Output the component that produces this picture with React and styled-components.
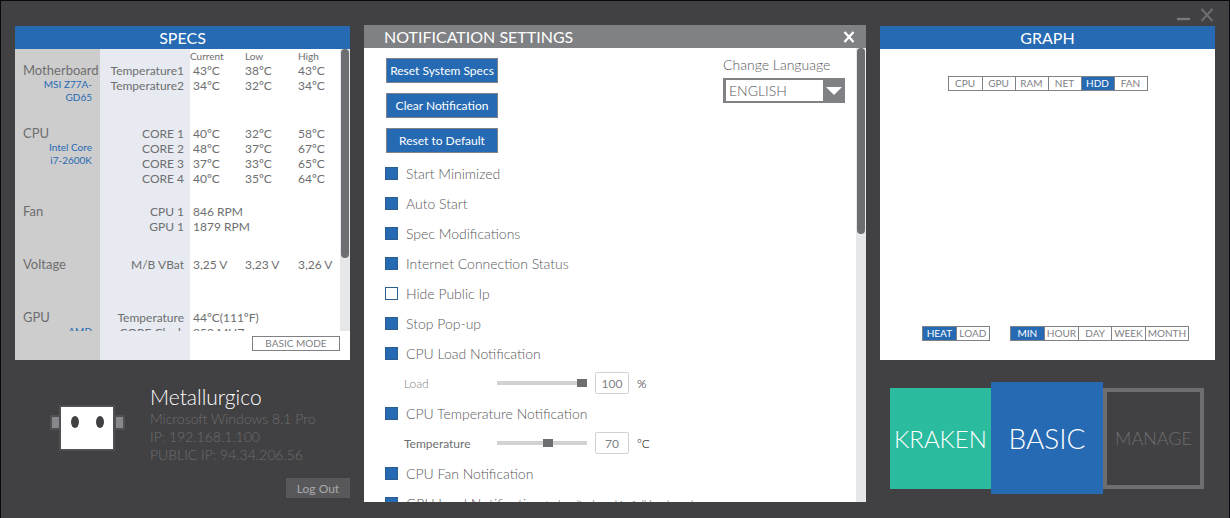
import { useState } from "react";
import styled, { createGlobalStyle } from "styled-components";

const specGroups = [
  {
    name: "Motherboard",
    model: "MSI Z77A-GD65",
    space: 33,
    rows: [
      ["Temperature1", "43ºC", "38ºC", "43ºC"],
      ["Temperature2", "34ºC", "32ºC", "34ºC"],
    ],
  },
  {
    name: "CPU",
    model: "Intel Core i7-2600K",
    space: 18,
    rows: [
      ["CORE 1", "40ºC", "32ºC", "58ºC"],
      ["CORE 2", "48ºC", "37ºC", "67ºC"],
      ["CORE 3", "37ºC", "33ºC", "65ºC"],
      ["CORE 4", "40ºC", "35ºC", "64ºC"],
    ],
  },
  {
    name: "Fan",
    space: 23,
    rows: [
      ["CPU 1", "846 RPM"],
      ["GPU 1", "1879 RPM"],
    ],
  },
  {
    name: "Voltage",
    space: 38,
    rows: [["M/B VBat", "3,25 V", "3,23 V", "3,26 V"]],
  },
  {
    name: "GPU",
    model: "AMD",
    space: 18,
    rows: [
      ["Temperature", "44ºC(111ºF)"],
      ["CORE Clock", "850 MHZ"],
    ],
  },
];

const options = [
  { id: "minimized", label: "Start Minimized", on: true },
  { id: "autostart", label: "Auto Start", on: true },
  { id: "specs", label: "Spec Modifications", on: true },
  { id: "internet", label: "Internet Connection Status", on: true },
  { id: "hideip", label: "Hide Public Ip", on: false },
  { id: "popup", label: "Stop Pop-up", on: true },
  {
    id: "cpuload",
    label: "CPU Load Notification",
    on: true,
    limit: { label: "Load", min: 0, value: 100, unit: "%", light: true },
  },
  {
    id: "cputemp",
    label: "CPU Temperature Notification",
    on: true,
    limit: { label: "Temperature", min: 30, value: 70, unit: "ºC" },
  },
  { id: "cpufan", label: "CPU Fan Notification", on: true },
  {
    id: "gpuload",
    label: "GPU Load Notification",
    note: "to be displayed in full load mode",
    on: true,
  },
];

const Specs = () => {
  return (
    <Panel>
      <PanelTitle>SPECS</PanelTitle>
      <SpecsBody>
        <ScrollArea>
          <SpecsTable>
            <colgroup>
              <col width='85' />
              <col width='90' />
              <col width='55' />
              <col width='53' />
              <col />
            </colgroup>
            <thead>
              <tr>
                <td colSpan={2}></td>
                <SpecsHead>Current</SpecsHead>
                <SpecsHead>Low</SpecsHead>
                <SpecsHead>High</SpecsHead>
              </tr>
            </thead>
            {specGroups.map((group) => (
              <tbody key={group.name}>
                {group.rows.map(([label, ...values], index) => (
                  <tr key={label}>
                    {index === 0 && (
                      <GroupCell rowSpan={group.rows.length + 1}>
                        {group.name}
                        {group.model && <Model>{group.model}</Model>}
                      </GroupCell>
                    )}
                    <LabelCell>{label}</LabelCell>
                    {values.map((value, i) => (
                      <ValueCell
                        key={i}
                        $first={i === 0}
                        colSpan={values.length === 1 ? 3 : 1}
                      >
                        {value}
                      </ValueCell>
                    ))}
                  </tr>
                ))}
                <SpaceRow $height={group.space}>
                  <td colSpan={4}></td>
                </SpaceRow>
              </tbody>
            ))}
          </SpecsTable>
        </ScrollArea>
        <ScrollTrack>
          <ScrollThumb $size={74} />
        </ScrollTrack>
      </SpecsBody>
      <SpecsFooter>
        <ModeButton type='button'>BASIC MODE</ModeButton>
      </SpecsFooter>
    </Panel>
  );
};

const Profile = () => {
  return (
    <StyledProfile>
      <Avatar viewBox='0 0 75 46' aria-hidden='true'>
        <rect x='0' y='10' width='75' height='15' fill='#505052' />
        <rect x='2' y='12' width='7' height='11' fill='#87888c' />
        <rect x='66' y='12' width='7' height='11' fill='#87888c' />
        <rect x='9' y='0' width='56' height='46' fill='#505052' />
        <rect x='11' y='2' width='52' height='42' fill='#ffffff' />
        <ellipse cx='25' cy='17' rx='4' ry='6' fill='#414042' />
        <ellipse cx='50' cy='17' rx='4' ry='6' fill='#414042' />
      </Avatar>
      <ProfileInfo>
        <UserName>Metallurgico</UserName>
        <InfoLine>Microsoft Windows 8.1 Pro</InfoLine>
        <InfoLine>IP: 192.168.1.100</InfoLine>
        <InfoLine>PUBLIC IP: 94.34.206.56</InfoLine>
      </ProfileInfo>
      <LogOutButton type='button'>Log Out</LogOutButton>
    </StyledProfile>
  );
};

const Limit = ({ id, limit }) => {
  const [value, setValue] = useState(limit.value);
  const changeHandler = (event) => setValue(event.target.value);

  return (
    <LimitRow>
      <LimitLabel htmlFor={`${id}-range`} $light={limit.light}>
        {limit.label}
      </LimitLabel>
      <Slider
        type='range'
        id={`${id}-range`}
        min={limit.min}
        max={100}
        value={value}
        onChange={changeHandler}
      />
      <LimitInput
        type='text'
        aria-label={limit.label}
        value={value}
        onChange={changeHandler}
      />
      <Unit>{limit.unit}</Unit>
    </LimitRow>
  );
};

const Option = ({ option }) => {
  const [checked, setChecked] = useState(option.on);

  return (
    <>
      <OptionRow>
        <CheckBox
          type='checkbox'
          id={option.id}
          checked={checked}
          onChange={() => setChecked(!checked)}
        />
        <label htmlFor={option.id}>
          {option.label} {option.note && <Note>{option.note}</Note>}
        </label>
      </OptionRow>
      {option.limit && <Limit id={option.id} limit={option.limit} />}
    </>
  );
};

const Settings = () => {
  return (
    <Panel>
      <SettingsTitle>
        NOTIFICATION SETTINGS
        <CloseButton type='button' aria-label='Close settings'>
          <svg width='12' height='12' viewBox='0 0 12 12'>
            <path d='M1.5 1L10.5 11M10.5 1L1.5 11' stroke='#fff' strokeWidth='2.4' />
          </svg>
        </CloseButton>
      </SettingsTitle>
      <SettingsBody>
        <SettingsContent>
          <SettingsTop>
            <ActionList>
              <ActionButton type='button'>Reset System Specs</ActionButton>
              <ActionButton type='button'>Clear Notification</ActionButton>
              <ActionButton type='button'>Reset to Default</ActionButton>
            </ActionList>
            <Language>
              <label htmlFor='language'>Change Language</label>
              <SelectBox>
                <Select id='language' defaultValue='ENGLISH'>
                  <option>ENGLISH</option>
                </Select>
                <SelectArrow viewBox='0 0 16 8' aria-hidden='true'>
                  <path d='M0 0H16L8 8Z' fill='#fff' />
                </SelectArrow>
              </SelectBox>
            </Language>
          </SettingsTop>
          {options.map((option) => (
            <Option key={option.id} option={option} />
          ))}
        </SettingsContent>
        <ScrollTrack>
          <ScrollThumb $size={41} />
        </ScrollTrack>
      </SettingsBody>
    </Panel>
  );
};

const Tabs = ({ items, initial }) => {
  const [active, setActive] = useState(initial);

  return (
    <TabList>
      {items.map((item) => (
        <Tab
          type='button'
          key={item}
          $active={item === active}
          onClick={() => setActive(item)}
        >
          {item}
        </Tab>
      ))}
    </TabList>
  );
};

const Graph = () => {
  return (
    <Panel>
      <PanelTitle>GRAPH</PanelTitle>
      <GraphBody>
        <Tabs items={["CPU", "GPU", "RAM", "NET", "HDD", "FAN"]} initial='HDD' />
        <GraphFooter>
          <Tabs items={["HEAT", "LOAD"]} initial='HEAT' />
          <Tabs items={["MIN", "HOUR", "DAY", "WEEK", "MONTH"]} initial='MIN' />
        </GraphFooter>
      </GraphBody>
    </Panel>
  );
};

const App = () => {
  return (
    <>
      <GlobalStyle />
      <Window>
        <TitleBar>
          <WindowButton type='button' aria-label='Minimize'>
            <svg width='14' height='14' viewBox='0 0 14 14'>
              <path d='M0 11H13' stroke='#77787a' strokeWidth='2.4' />
            </svg>
          </WindowButton>
          <WindowButton type='button' aria-label='Close'>
            <svg width='14' height='14' viewBox='0 0 14 14'>
              <path d='M1.5 1L12.5 13M12.5 1L1.5 13' stroke='#6d6e70' strokeWidth='2' />
            </svg>
          </WindowButton>
        </TitleBar>
        <Columns>
          <SideColumn>
            <Specs />
            <Profile />
          </SideColumn>
          <MainColumn>
            <Settings />
          </MainColumn>
          <SideColumn>
            <Graph />
            <TileRow>
              <Tile type='button' $color='#2bbb9e'>
                KRAKEN
              </Tile>
              <BigTile type='button' $color='#256ab3'>
                BASIC
              </BigTile>
              <OutlineTile type='button'>MANAGE</OutlineTile>
            </TileRow>
          </SideColumn>
        </Columns>
      </Window>
    </>
  );
};

export default App;

const GlobalStyle = createGlobalStyle`
  * {
    box-sizing: border-box;
  }
  body {
    margin: 0;
    background-color: #414042;
    font-family: Lato, "Liberation Sans", sans-serif;
    font-size: 12px;
    color: #6d6e70;
  }
  button, input, select {
    margin: 0;
    padding: 0;
    border: none;
    border-radius: 0;
    background: none;
    font-family: inherit;
    color: inherit;
  }
  button {
    cursor: pointer;
  }
`;

const Window = styled.div`
  display: flex;
  flex-direction: column;
  height: 100vh;
  border: 1px solid #08080f;
  border-bottom: none;
  background-color: #414042;
`;

const TitleBar = styled.div`
  display: flex;
  justify-content: flex-end;
  align-items: center;
  gap: 9px;
  height: 24px;
  padding: 4px 15px 0 0;
`;

const WindowButton = styled.button`
  display: flex;
`;

const Columns = styled.div`
  flex: 1;
  min-height: 0;
  display: grid;
  grid-template-columns: 335fr 502fr 335fr;
  gap: 14px;
  padding: 0 14px;
`;

const SideColumn = styled.div`
  display: flex;
  flex-direction: column;
  min-width: 0;
  min-height: 0;
  padding-top: 1px;
`;

const MainColumn = styled(SideColumn)`
  padding: 0 0 16px;
`;

const Panel = styled.section`
  flex: 1;
  min-height: 0;
  display: flex;
  flex-direction: column;
  background-color: white;
`;

const PanelTitle = styled.h2`
  flex: none;
  margin: 0;
  height: 23px;
  line-height: 24px;
  background-color: #256ab3;
  color: white;
  font-size: 16px;
  font-weight: 400;
  text-align: center;
`;

const SettingsTitle = styled(PanelTitle)`
  display: flex;
  justify-content: space-between;
  align-items: center;
  padding: 0 11px 0 20px;
  background-color: #808184;
`;

const CloseButton = styled.button`
  display: flex;
`;

const ScrollArea = styled.div`
  flex: 1;
  min-width: 0;
  overflow-y: auto;
  scrollbar-width: none;
`;

const ScrollTrack = styled.div`
  flex: none;
  width: 10px;
  padding: 0 1px;
  background-color: #e6e7e9;
`;

const ScrollThumb = styled.div`
  height: ${(props) => props.$size}%;
  border-radius: 4px;
  background-color: #6d6e71;
`;

const SpecsBody = styled.div`
  flex: 1;
  min-height: 0;
  display: flex;
  background: linear-gradient(
    to right,
    #cdcdcd 85px,
    #e7ebf1 85px,
    #e7ebf1 175px,
    white 175px
  );
`;

const SpecsTable = styled.table`
  width: 100%;
  table-layout: fixed;
  border-collapse: collapse;
  line-height: 15px;

  td,
  th {
    padding: 0;
    font-weight: 400;
    text-align: left;
    vertical-align: top;
    white-space: nowrap;
  }
`;

const SpecsHead = styled.th`
  height: 14px;
  line-height: 14px;
  font-size: 10px;
`;

const GroupCell = styled.th`
  && {
    padding: 0 8px;
    font-size: 13px;
    white-space: normal;
  }
`;

const Model = styled.div`
  padding-left: 16px;
  line-height: 13px;
  font-size: 10px;
  color: #256ab3;
  text-align: right;
`;

const LabelCell = styled.td`
  && {
    padding-right: 6px;
    text-align: right;
  }
`;

const ValueCell = styled.td`
  && {
    padding-left: ${(props) => (props.$first ? "3px" : "0")};
  }
`;

const SpaceRow = styled.tr`
  height: ${(props) => props.$height}px;
`;

const SpecsFooter = styled.div`
  flex: none;
  display: flex;
  justify-content: flex-end;
  padding: 5px 10px 9px;
  background: linear-gradient(
    to right,
    #cdcdcd 85px,
    #e7ebf1 85px,
    #e7ebf1 175px,
    white 175px
  );
`;

const ModeButton = styled.button`
  width: 88px;
  height: 15px;
  border: 1px solid #808184;
  line-height: 13px;
  font-size: 10px;
  color: #808184;
`;

const StyledProfile = styled.div`
  flex: none;
  display: grid;
  grid-template-columns: 75px 1fr;
  column-gap: 25px;
  padding: 23px 0 20px 35px;
`;

const Avatar = styled.svg`
  width: 75px;
  height: 46px;
  margin-top: 22px;
`;

const ProfileInfo = styled.div`
  font-weight: 300;
`;

const UserName = styled.div`
  line-height: 27px;
  font-size: 21px;
  color: white;
`;

const InfoLine = styled.div`
  line-height: 18px;
  font-size: 14px;
  color: #6d6e70;
`;

const LogOutButton = styled.button`
  grid-column: 2;
  justify-self: end;
  width: 64px;
  height: 20px;
  margin-top: 14px;
  background-color: #58585a;
  font-size: 12px;
  color: #a7a9ac;
`;

const SettingsBody = styled.div`
  flex: 1;
  min-height: 0;
  display: flex;
`;

const SettingsContent = styled(ScrollArea)`
  padding: 10px 11px 0 21px;
  font-size: 14px;
  font-weight: 300;
  color: #58595b;
`;

const SettingsTop = styled.div`
  display: flex;
  justify-content: space-between;
  align-items: flex-start;
  padding-bottom: 5px;
`;

const ActionList = styled.div`
  display: flex;
  flex-direction: column;
  gap: 10px;
  padding-left: 1px;
`;

const ActionButton = styled.button`
  width: 112px;
  height: 25px;
  border: 1px solid #808184;
  background-color: #256ab3;
  font-size: 12px;
  color: white;
`;

const Language = styled.div`
  display: flex;
  flex-direction: column;
  gap: 6px;
  width: 122px;
  line-height: 14px;
`;

const SelectBox = styled.div`
  display: grid;
  align-items: center;

  > * {
    grid-area: 1 / 1;
  }
`;

const Select = styled.select`
  appearance: none;
  width: 100%;
  height: 25px;
  padding-left: 3px;
  border: solid #808184;
  border-width: 2px 22px 2px 3px;
  background-color: white;
  font-size: 14px;
  font-weight: 300;
`;

const SelectArrow = styled.svg`
  justify-self: end;
  width: 16px;
  height: 8px;
  margin-right: 3px;
  pointer-events: none;
`;

const OptionRow = styled.div`
  display: flex;
  align-items: center;
  gap: 8px;
  height: 30px;
`;

const Note = styled.small`
  font-size: 11px;
`;

const CheckBox = styled.input`
  appearance: none;
  width: 13px;
  height: 13px;
  border: 1px solid #2c5f8f;
  background-color: white;

  &:checked {
    background-color: #256ab3;
  }
`;

const LimitRow = styled.div`
  display: flex;
  align-items: center;
  height: 30px;
  padding-left: 19px;
`;

const LimitLabel = styled.label`
  width: 93px;
  font-size: 12px;
  font-weight: ${(props) => (props.$light ? 300 : 400)};
  color: ${(props) => (props.$light ? "#808184" : "#6d6e70")};
`;

const Slider = styled.input`
  appearance: none;
  width: 90px;
  height: 8px;

  &::-webkit-slider-runnable-track {
    height: 4px;
    background-color: #d1d2d4;
  }
  &::-webkit-slider-thumb {
    appearance: none;
    width: 10px;
    height: 8px;
    margin-top: -2px;
    background-color: #6d6e70;
  }
`;

const LimitInput = styled.input`
  width: 34px;
  height: 22px;
  margin: 0 8px;
  border: 1px solid #d1d2d4;
  border-radius: 2px;
  font-size: 12px;
  text-align: center;
  color: #808184;
`;

const Unit = styled.span`
  font-size: 12px;
  color: black;
`;

const GraphBody = styled.div`
  flex: 1;
  display: flex;
  flex-direction: column;
  justify-content: space-between;
  align-items: center;
  padding: 27px 0 19px;
`;

const GraphFooter = styled.div`
  display: flex;
  gap: 20px;
  padding-left: 16px;
`;

const TabList = styled.div`
  display: flex;
  border: 1px solid #808184;
`;

const Tab = styled.button`
  min-width: 33px;
  height: 13px;
  padding: 0 2px;
  line-height: 13px;
  font-size: 10px;
  background-color: ${(props) => (props.$active ? "#256ab3" : "white")};
  color: ${(props) => (props.$active ? "white" : "#808184")};

  & + & {
    border-left: 1px solid #808184;
  }
`;

const TileRow = styled.div`
  flex: none;
  display: flex;
  align-items: center;
  padding: 22px 0 24px 10px;
`;

const Tile = styled.button`
  flex: none;
  width: 101px;
  height: 101px;
  background-color: ${(props) => props.$color};
  font-size: 24px;
  font-weight: 300;
  color: white;
`;

const BigTile = styled(Tile)`
  width: 112px;
  height: 112px;
  font-size: 28px;
`;

const OutlineTile = styled(Tile)`
  border: 4px solid #6d6e70;
  font-size: 18px;
  color: #6d6e70;
`;
